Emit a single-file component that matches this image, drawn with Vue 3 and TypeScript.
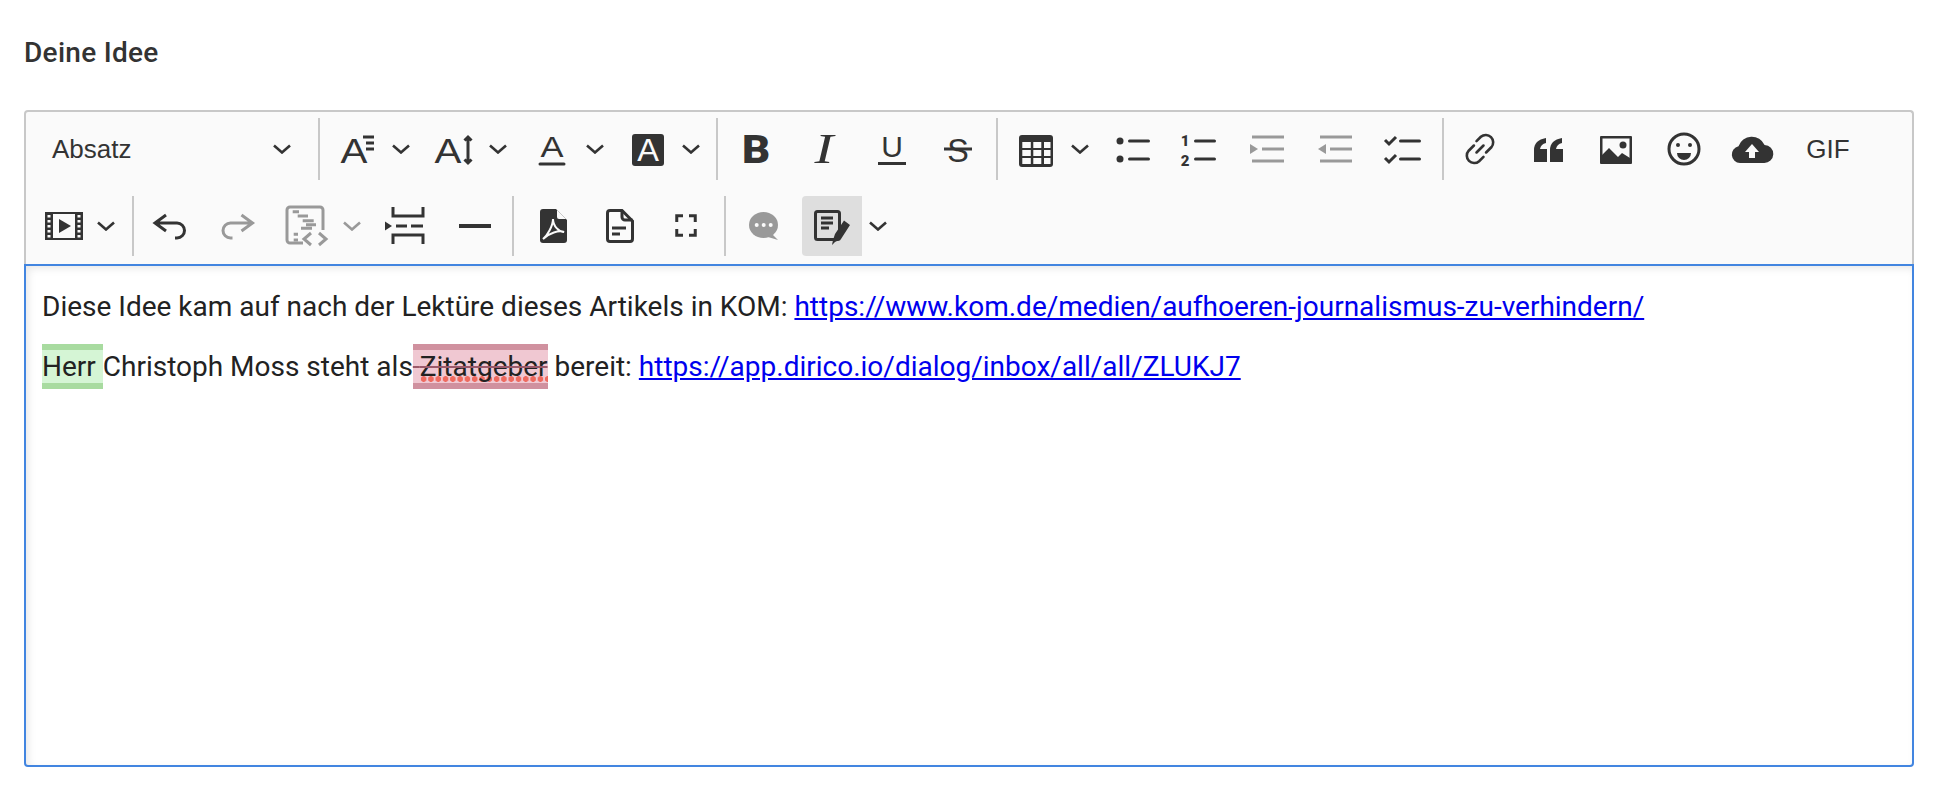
<template>
  <div class="page">
    <div class="label">Deine Idee</div>
    <div class="editor">
      <div class="toolbar">
        <div v-for="(row, r) in rows" :key="r" class="row" :class="`row-${r + 1}`">
          <template v-for="(item, i) in row" :key="i">
            <span
              v-if="item.kind === 'sep'"
              class="sep"
              :style="{ marginLeft: `${item.ml}px`, marginRight: `${item.mr}px` }"
            />
            <div v-else-if="item.kind === 'select'" class="select">
              <span>Absatz</span>
              <svg class="chev" viewBox="0 0 18 10"><polyline points="1,1.5 9,8.5 17,1.5" /></svg>
            </div>
            <div v-else class="cell" :class="{ muted: item.muted }">
              <div class="btn" :class="{ active: item.active, gif: item.icon === 'gif' }">
                <template v-if="item.icon === 'gif'">GIF</template>
                <svg v-else class="ico" viewBox="0 0 48 48" v-html="icons[item.icon!]" />
              </div>
              <div v-if="item.arrow" class="arrow" :style="{ width: `${item.arrow}px` }">
                <svg class="chev" viewBox="0 0 18 10"><polyline points="1,1.5 9,8.5 17,1.5" /></svg>
              </div>
            </div>
          </template>
        </div>
      </div>
      <div class="body">
        <p>
          Diese Idee kam auf nach der Lektüre dieses Artikels in KOM:
          <a href="#">https://www.kom.de/medien/aufhoeren-journalismus-zu-verhindern/</a>
        </p>
        <p>
          <ins class="ins">Herr </ins>Christoph Moss steht als<del class="del">{{ ' ' }}<span class="spell">Zitatgeber</span></del>
          bereit: <a href="#">https://app.dirico.io/dialog/inbox/all/all/ZLUKJ7</a>
        </p>
      </div>
    </div>
  </div>
</template>

<script setup lang="ts">
interface ToolItem {
  kind: 'select' | 'sep' | 'btn'
  icon?: string
  arrow?: number
  muted?: boolean
  active?: boolean
  ml?: number
  mr?: number
}

const sep = (ml: number, mr: number): ToolItem => ({ kind: 'sep', ml, mr })
const btn = (icon: string, arrow?: number, muted?: boolean, active?: boolean): ToolItem => ({
  kind: 'btn',
  icon,
  arrow,
  muted,
  active,
})

const rows: ToolItem[][] = [
  [
    { kind: 'select' },
    sep(0, 3),
    btn('fontFamily', 28),
    btn('fontSize', 30),
    btn('textColor', 28),
    btn('bgColor', 28),
    sep(7, 4),
    btn('bold'),
    btn('italic'),
    btn('underline'),
    btn('strike'),
    sep(2, 4),
    btn('table', 28),
    btn('bullets'),
    btn('numbers'),
    btn('indent', undefined, true),
    btn('outdent', undefined, true),
    btn('checks'),
    sep(4, 2),
    btn('link'),
    btn('quote'),
    btn('image'),
    btn('emoji'),
    btn('cloud'),
    btn('gif'),
  ],
  [
    btn('video', 24),
    sep(10, 2),
    btn('undo'),
    btn('redo', undefined, true),
    btn('code', 32, true),
    btn('pageBreak'),
    btn('hr'),
    sep(4, 5),
    btn('pdf'),
    btn('doc'),
    btn('fullscreen'),
    sep(1, 4),
    btn('comment', undefined, true),
    btn('track', 32, false, true),
  ],
]

const line = 'fill="none" stroke="currentColor" stroke-width="3"'

// letter inside an icon, stretched a little because the icon font runs wider than Liberation
function letter(ch: string, x: number, y: number, size: number, sx = 1, fill = 'currentColor', extra = 'font-family="Liberation Sans, sans-serif"') {
  return `<text transform="translate(${x} ${y}) scale(${sx} 1)" text-anchor="middle" font-size="${size}" fill="${fill}" ${extra}>${ch}</text>`
}

const icons: Record<string, string> = {
  fontFamily: `${letter('A', 21, 38, 36, 1.12)}
    <path d="M30 12H41M33 18H41M33 24H41" ${line} stroke-width="2.6"/>`,
  fontSize: `${letter('A', 19, 38, 36, 1.12)}
    <path d="M39 12V38M35.5 15.5L39 12L42.5 15.5M35.5 34.5L39 38L42.5 34.5" ${line} stroke-width="2.6"/>`,
  textColor: `${letter('A', 25, 32, 30, 1.15)}
    <path d="M13 39H37" ${line} stroke-width="4" stroke-linecap="round"/>`,
  bgColor: `<rect x="9" y="9" width="32" height="32" rx="3" fill="currentColor"/>
    ${letter('A', 25, 36, 31, 1.05, '#fafafa')}`,
  bold: letter('B', 24, 38, 39, 1.12, 'currentColor', 'font-weight="900" font-family="Roboto, sans-serif"'),
  italic: letter('I', 24, 38, 42, 1.35, 'currentColor', 'font-style="italic" font-family="Liberation Serif, serif"'),
  underline: `${letter('U', 24, 32, 30)}
    <rect x="10" y="37" width="28" height="3" fill="currentColor"/>`,
  strike: `${letter('S', 22, 37, 34, 0.95)}
    <rect x="8" y="22.5" width="28" height="3" fill="currentColor"/>`,
  table: `<rect x="7" y="10" width="34" height="32" rx="3" fill="currentColor"/>
    <path d="M10.3 17H18.8V23H10.3ZM21.3 17H29.3V23H21.3ZM32 17H38.5V23H32ZM10.3 25H18.8V31H10.3ZM21.3 25H29.3V31H21.3ZM32 25H38.5V31H32ZM10.3 33H18.8V39H10.3ZM21.3 33H29.3V39H21.3ZM32 33H38.5V39H32Z" fill="#fafafa"/>`,
  bullets: `<circle cx="12" cy="16" r="3.5" fill="currentColor"/><circle cx="12" cy="34" r="3.5" fill="currentColor"/>
    <path d="M21.5 16H40.5M21.5 34H40.5" ${line} stroke-linecap="round"/>`,
  numbers: `${letter('1', 9, 21, 15, 1, 'currentColor', 'font-weight="900" font-family="Roboto, sans-serif"')}
    ${letter('2', 9, 41, 15, 1, 'currentColor', 'font-weight="900" font-family="Roboto, sans-serif"')}
    <path d="M19.5 16H38.5M19.5 34H38.5" ${line} stroke-linecap="round"/>`,
  indent: `<path d="M8 12H40M18 24H40M8 36H40" ${line}/><path d="M6 19L14 24L6 29Z" fill="currentColor"/>`,
  outdent: `<path d="M8 12H40M18 24H40M8 36H40" ${line}/><path d="M14 19L6 24L14 29Z" fill="currentColor"/>`,
  checks: `<path d="M5 15L9 19L16 12M5 33L9 37L16 30" ${line} stroke-width="2.6"/>
    <path d="M20.5 16H39.5M20.5 34H39.5" ${line} stroke-linecap="round"/>`,
  link: `<g transform="translate(24 24) scale(.87) translate(-24 -24)"><path d="M20 15L25 10a8.5 8.5 0 0 1 12 12L31 28M17 20L11 26a8.5 8.5 0 0 0 12 12L28 33M20 28L28 20" ${line} stroke-width="3.6" stroke-linecap="round"/></g>`,
  quote: `<path d="M10 37V25Q10 15 22 13V18Q17 19 16 24H23V37ZM26 37V25Q26 15 38 13V18Q33 19 32 24H39V37Z" fill="currentColor"/>`,
  image: `<rect x="8" y="11" width="32" height="28" rx="1" fill="currentColor"/>
    <rect x="10.5" y="13.5" width="27" height="21" fill="#fafafa"/>
    <circle cx="31" cy="20" r="3.5" fill="currentColor"/>
    <path d="M10 37V30L17 23L26 32L30 28L38 33V37Z" fill="currentColor"/>`,
  emoji: `<circle cx="24" cy="24" r="15" ${line}/><circle cx="18" cy="20" r="2" fill="currentColor"/><circle cx="30" cy="20" r="2" fill="currentColor"/>
    <path d="M17 28H31A7 7 0 0 1 17 28Z" fill="currentColor"/>`,
  cloud: `<path d="M12 38A8.5 8.5 0 0 1 10.5 21.2A14 14 0 0 1 36.6 20A9 9 0 0 1 36 38Z" fill="currentColor"/>
    <path d="M24 19L31 27H27V33H21V27H17Z" fill="#fafafa"/>`,
  video: `<rect x="5" y="10" width="38" height="28" fill="currentColor"/>
    <rect x="13" y="12" width="22" height="24" fill="#fafafa"/>
    <path d="M19 17L31 24L19 31Z" fill="currentColor"/>
    <path d="M7.5 13h3v2.5h-3zM7.5 18h3v2.5h-3zM7.5 23h3v2.5h-3zM7.5 28h3v2.5h-3zM7.5 33h3v2.5h-3zM37.5 13h3v2.5h-3zM37.5 18h3v2.5h-3zM37.5 23h3v2.5h-3zM37.5 28h3v2.5h-3zM37.5 33h3v2.5h-3z" fill="#fafafa"/>`,
  undo: `<path d="M9 21H31a7.5 7.5 0 0 1 0 15H29M20 13L9 21L20 29" ${line}/>`,
  redo: `<path d="M38.5 21H16.5a7.5 7.5 0 0 0 0 15H18.5M27.5 13L38.5 21L27.5 29" ${line}/>`,
  code: `<path d="M21 41H8a3 3 0 0 1-3-3V8a3 3 0 0 1 3-3H38a3 3 0 0 1 3 3V28" ${line}/>
    <path d="M10.7 9.7H17M15.7 14H26M20.7 18.7H31.7M24 22.7H34M19 26.3H30M11.7 32.3H16M11.7 38H16" ${line} stroke-width="2"/>
    <path d="M29 31L22 37L29 43M37 31L44 37L37 43" ${line}/>`,
  pageBreak: `<path d="M11 5V14H41V5M11 42V33H41V42M14 24H25M29 24H41" ${line}/><path d="M3 19.5L10 24L3 28.5Z" fill="currentColor"/>`,
  hr: `<rect x="9" y="22" width="32" height="4" fill="currentColor"/>`,
  pdf: `<path d="M14 7H27L38 18V38a3 3 0 0 1-3 3H14a3 3 0 0 1-3-3V10a3 3 0 0 1 3-3Z" fill="currentColor"/>
    <path d="M28 8L37 17H30a2 2 0 0 1-2-2Z" fill="#fafafa"/>
    <path d="M14 37C18 34 24 24 24 17C24 24 30 30 35 30C30 28 20 31 14 37Z" fill="none" stroke="#fafafa" stroke-width="2"/>`,
  doc: `<g transform="translate(-1 0)"><path d="M14 8.5H26L36.5 19V37a2.5 2.5 0 0 1-2.5 2.5H14a2.5 2.5 0 0 1-2.5-2.5V11a2.5 2.5 0 0 1 2.5-2.5Z" ${line}/>
    <path d="M26 8.5V15a3 3 0 0 0 3 3H36.5M16 26H30M16 32H24" ${line}/></g>`,
  fullscreen: `<path d="M11.75 20V13.75H18M24 13.75H30.25V20M30.25 27V33.25H24M18 33.25H11.75V27" ${line} stroke-width="3.5"/>`,
  comment: `<ellipse cx="23.5" cy="23" rx="14.5" ry="13" fill="currentColor"/>
    <path d="M30 30L38 38L28 35Z" fill="currentColor"/>
    <circle cx="16.7" cy="23" r="2" fill="#fafafa"/><circle cx="23.7" cy="23" r="2" fill="#fafafa"/><circle cx="30.7" cy="23" r="2" fill="#fafafa"/>`,
  track: `<rect x="7.5" y="9.5" width="24" height="28" rx="2" ${line}/>
    <path d="M13 16H25M13 21H25M13 26H21" ${line} stroke-width="2.4"/>
    <path d="M36 18.5L42 23L33 37L27 40L24 43L25 38L27 32Z" fill="currentColor"/>`,
}
</script>

<style scoped>
.page {
  padding: 33px 20px 0 24px;
  font-family: Roboto, sans-serif;
}

.label {
  height: 40px;
  margin-bottom: 37px;
  line-height: 40px;
  font-size: 28px;
  font-weight: 500;
  letter-spacing: 0.3px;
  color: #333;
}

.toolbar {
  border: 2px solid #c8c8c8;
  border-bottom: none;
  border-radius: 4px 4px 0 0;
  background: #fafafa;
  padding: 6px 0 8px;
  color: #333;
}

.row {
  display: flex;
  align-items: stretch;
}

.row-1 {
  height: 62px;
  margin-bottom: 16px;
}

.row-2 {
  height: 60px;
  padding-left: 4px;
}

.select {
  width: 292px;
  box-sizing: border-box;
  padding: 0 27px 0 26px;
  display: flex;
  align-items: center;
  justify-content: space-between;
  font-family: 'Liberation Sans', sans-serif;
  font-size: 26px;
}

.sep {
  width: 2px;
  background: #c8c8c8;
}

.cell {
  display: flex;
  align-items: center;
  height: 100%;
  padding: 0 4px;
}

.cell.muted {
  color: #999;
}

.btn {
  width: 60px;
  height: 60px;
  display: flex;
  align-items: center;
  justify-content: center;
  border-radius: 4px 0 0 4px;
}

.btn.active {
  background: #dedede;
}

.btn.gif {
  width: 76px;
  font-family: 'Liberation Sans', sans-serif;
  font-size: 26px;
}

.ico {
  width: 48px;
  height: 48px;
  display: block;
  overflow: visible;
}

.arrow {
  display: flex;
  align-items: center;
  justify-content: center;
}

.chev {
  width: 18px;
  height: 10px;
  display: block;
}

.chev polyline {
  fill: none;
  stroke: currentColor;
  stroke-width: 2.6;
}

.body {
  height: 503px;
  box-sizing: border-box;
  border: 2px solid #4285e0;
  border-radius: 0 0 4px 4px;
  padding: 21px 16px 0;
  box-shadow: inset 3px 3px 8px -1px rgba(0, 0, 0, 0.1);
  font-size: 28px;
  line-height: 40px;
  color: #222;
}

.body p {
  margin: 0 0 20px;
}

.body a {
  color: #0000ee;
  text-decoration: underline;
}

.ins {
  text-decoration: none;
  background: #d5f5d5;
  border-top: 6px solid #a8dba0;
  border-bottom: 6px solid #a8dba0;
}

.del {
  background: #f0c8d2;
  border-top: 6px solid #d0919f;
  border-bottom: 6px solid #d0919f;
  text-decoration-color: #9b5a6b;
}

.spell {
  background-image: radial-gradient(circle at center, #ee6a5f 2.6px, transparent 3.1px);
  background-size: 7.3px 8px;
  background-position: left bottom;
  background-repeat: repeat-x;
}
</style>
